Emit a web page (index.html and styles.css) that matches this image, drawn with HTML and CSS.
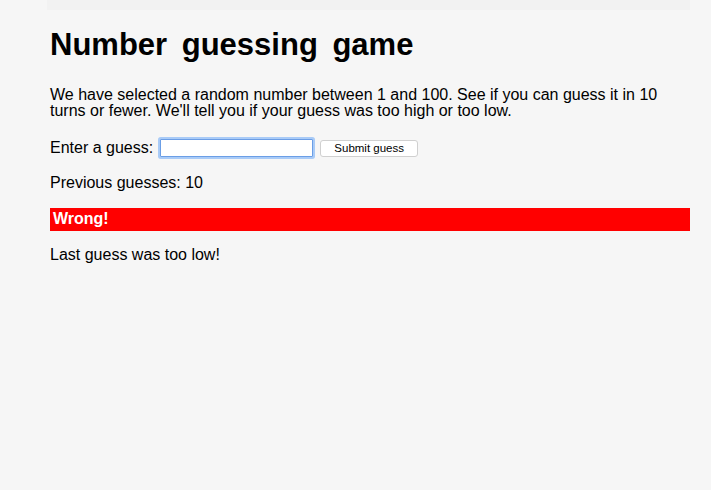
FILE: index.html
```html
<!DOCTYPE html>
<html>
<head>
<meta charset="utf-8">
<title>Number guessing game</title>
<link rel="stylesheet" href="styles.css">
</head>
<body>
<div class="page">
  <div class="topbar"></div>
  <h1 class="title">Number guessing game</h1>
  <p class="intro">We have selected a random number between 1 and 100. See if you can guess it in 10 turns or fewer. We'll tell you if your guess was too high or too low.</p>
  <div class="form-row">
    <label class="label" for="guessField">Enter a guess:</label>
    <input class="guess-field" id="guessField" type="text">
    <button class="guess-submit" type="button">Submit guess</button>
  </div>
  <p class="guesses">Previous guesses: 10</p>
  <p class="last-result">Wrong!</p>
  <p class="low-or-hi">Last guess was too low!</p>
</div>
</body>
</html>
```
FILE: styles.css
```css
html, body {
  margin: 0;
  padding: 0;
  background: #f6f6f6;
}
body {
  font-family: "Liberation Sans", Arial, Helvetica, sans-serif;
  font-size: 16px;
  color: #000;
}
.page {
  width: 640px;
  margin-left: 50px;
  display: flex;
  flex-direction: column;
}
.topbar {
  height: 10px;
  width: 643px;
  margin-left: -3px;
  background: #f2f2f2;
}
.title {
  font-size: 31px;
  line-height: 34px;
  font-weight: bold;
  word-spacing: 6px;
  margin: 18px 0 25px;
}
.intro {
  margin: 0;
  line-height: 16px;
}
.form-row {
  display: flex;
  align-items: center;
  margin-top: 18px;
  height: 22px;
}
.label {
  margin-right: 5px;
  line-height: 18px;
}
.guess-field {
  box-sizing: border-box;
  width: 153px;
  height: 18px;
  margin: 0 2px;
  padding: 0 2px;
  border: 1px solid #6b9ee6;
  border-radius: 1px;
  box-shadow: 0 0 0 2px #a9cbf7;
  background: #fff;
  outline: none;
  font-family: inherit;
  font-size: 13px;
}
.guess-submit {
  box-sizing: border-box;
  width: 98px;
  height: 17px;
  margin-left: 5px;
  padding: 0;
  background: #fff;
  border: 1px solid #d0d0d0;
  border-radius: 3px;
  font-family: "Liberation Sans", Arial, Helvetica, sans-serif;
  font-size: 11.5px;
  color: #000;
}
.guesses {
  margin: 15px 0 0;
}
.last-result {
  margin: 16px 0 0;
  background: #ff0000;
  color: #fff;
  font-weight: bold;
  padding: 2px 3px 4px;
  line-height: 17px;
}
.low-or-hi {
  margin: 15px 0 0;
}
```
